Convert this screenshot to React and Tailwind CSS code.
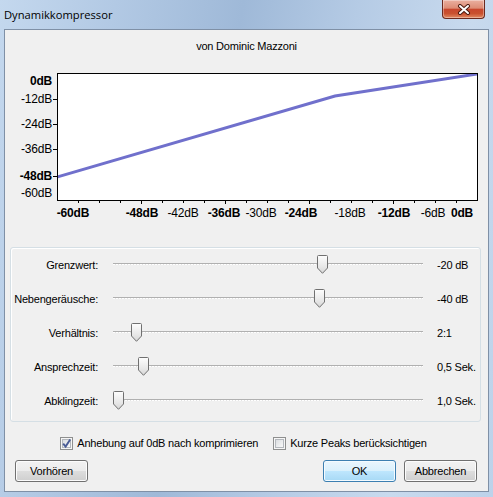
import React from 'react';

const sliders = [
  { label: 'Grenzwert:', value: '-20 dB', left: 204 },
  { label: 'Nebengeräusche:', value: '-40 dB', left: 201 },
  { label: 'Verhältnis:', value: '2:1', left: 18 },
  { label: 'Ansprechzeit:', value: '0,5 Sek.', left: 25 },
  { label: 'Abklingzeit:', value: '1,0 Sek.', left: 0 },
];

const yLabels = [
  { t: '0dB', y: 25, bold: true },
  { t: '-12dB', y: 43 },
  { t: '-24dB', y: 68 },
  { t: '-36dB', y: 93 },
  { t: '-48dB', y: 120, bold: true },
  { t: '-60dB', y: 137 },
];

const xLabels = [
  { t: '-60dB', x: 68, bold: true },
  { t: '-48dB', x: 137, bold: true },
  { t: '-42dB', x: 178 },
  { t: '-36dB', x: 219, bold: true },
  { t: '-30dB', x: 256 },
  { t: '-24dB', x: 296, bold: true },
  { t: '-18dB', x: 345 },
  { t: '-12dB', x: 389, bold: true },
  { t: '-6dB', x: 428 },
  { t: '0dB', x: 457, bold: true },
];

function Chart() {
  const ticks = [];
  for (let k = 1; k < 20; k++) ticks.push(k);
  return (
    <svg width="483" height="165" className="block" style={{ fontFamily: '"Liberation Sans", Arial, sans-serif' }}>
      <defs>
        <clipPath id="plot">
          <rect x="53" y="14" width="419" height="126" />
        </clipPath>
      </defs>
      <rect x="52.5" y="13.5" width="420" height="127" fill="#ffffff" />
      <polyline points="52,117 330,36 472,14" fill="none" stroke="#7070cc" strokeWidth="3" clipPath="url(#plot)" />
      <rect x="52.5" y="13.5" width="420" height="127" fill="none" stroke="#000000" />
      {[39.5, 64.5, 89.5, 116.5].map((y) => (
        <line key={y} x1="48" x2="52" y1={y} y2={y} stroke="#000000" />
      ))}
      {ticks.map((k) => (
        <line key={k} x1={52.5 + 21 * k} x2={52.5 + 21 * k} y1="141" y2={k % 4 === 0 ? 144 : 143} stroke="#000000" />
      ))}
      {yLabels.map((l) => (
        <text key={l.t} x="47" y={l.y} textAnchor="end" fontSize="12" fontWeight={l.bold ? 'bold' : 'normal'} fill="#000">
          {l.t}
        </text>
      ))}
      {xLabels.map((l) => (
        <text key={l.t} x={l.x} y="157" textAnchor="middle" fontSize="12" fontWeight={l.bold ? 'bold' : 'normal'} fill="#000">
          {l.t}
        </text>
      ))}
    </svg>
  );
}

function Thumb({ left }) {
  return (
    <svg width="11" height="19" className="absolute top-0" style={{ left }}>
      <defs>
        <linearGradient id={'tg' + left} x1="0" y1="0" x2="0" y2="1">
          <stop offset="0" stopColor="#fdfdfd" />
          <stop offset="0.6" stopColor="#e8e8e8" />
          <stop offset="1" stopColor="#d6d6d6" />
        </linearGradient>
      </defs>
      <path
        d="M1.5,0.5 H9.5 Q10.5,0.5 10.5,1.5 V13 L5.5,18.3 L0.5,13 V1.5 Q0.5,0.5 1.5,0.5 Z"
        fill={'url(#tg' + left + ')'}
        stroke="#707070"
      />
    </svg>
  );
}

function Checkbox({ checked, id }) {
  return (
    <svg width="13" height="13" className="shrink-0">
      <defs>
        <linearGradient id={id} x1="0" y1="0" x2="1" y2="1">
          <stop offset="0" stopColor="#d9dcdf" />
          <stop offset="1" stopColor="#fbfbfb" />
        </linearGradient>
      </defs>
      <rect x="0.5" y="0.5" width="12" height="12" fill="#f6f6f6" stroke="#8e8f8f" />
      <rect x="2.5" y="2.5" width="8" height="8" fill={'url(#' + id + ')'} stroke="#b4b8bd" />
      {checked && (
        <path d="M3.2,6.6 L5.6,9.6 L10.2,2.4" fill="none" stroke="#4a5c96" strokeWidth="1.9" />
      )}
    </svg>
  );
}

function Button({ children, primary }) {
  if (primary) {
    return (
      <button className="w-[73px] h-[22px] rounded-[3px] border border-[#3c7fb1] bg-[linear-gradient(180deg,#eaf6fd_0%,#d9f0fc_50%,#bee6fd_51%,#a7d9f5_100%)] shadow-[inset_0_0_0_1px_#f4fbff] text-[11px] tracking-[-0.2px] text-black">
        {children}
      </button>
    );
  }
  return (
    <button className="w-[73px] h-[22px] rounded-[3px] border border-[#707070] bg-[linear-gradient(180deg,#f2f2f2_0%,#ebebeb_50%,#dddddd_51%,#cfcfcf_100%)] shadow-[inset_0_0_0_1px_#fcfcfc] text-[11px] tracking-[-0.2px] text-black">
      {children}
    </button>
  );
}

export default function App() {
  return (
    <div className="w-[493px] h-[497px] flex flex-col overflow-hidden bg-[linear-gradient(100deg,#c4d8ee_0%,#b2c9e4_20%,#9fb9d8_42%,#b5cbe5_62%,#c8daee_82%,#bcd2ea_100%)] font-['Liberation_Sans',Arial,sans-serif]">
      <div className="h-[29px] shrink-0 flex items-start">
        <div className="pl-[4px] pt-[7px] leading-[16px] text-[11.2px] text-black font-['Open_Sans','Liberation_Sans',sans-serif]">
          Dynamikkompressor
        </div>
        <div className="ml-auto mr-[8px] w-[43px] h-[19px] rounded-b-[4px] border border-t-0 border-[#6b2a1f] bg-[linear-gradient(180deg,#eab0a0_0%,#dd8c75_45%,#c8472d_52%,#c9512f_75%,#e28a62_100%)] shadow-[inset_0_0_0_1px_rgba(255,255,255,0.35)] flex items-center justify-center">
          <svg width="14" height="11">
            <path d="M3,2 L11,9 M11,2 L3,9" stroke="#4a1a10" strokeWidth="4" strokeLinecap="round" />
            <path d="M3,2 L11,9 M11,2 L3,9" stroke="#ffffff" strokeWidth="2" strokeLinecap="round" />
          </svg>
        </div>
      </div>

      <div className="ml-[4px] mr-[4px] h-[463px] shrink-0 border border-[#7f90a6] bg-[#f0f0f0] flex flex-col text-[11px] tracking-[-0.2px] text-black">
        <div className="mt-[10px] h-[13px] leading-[13px] text-center">von Dominic Mazzoni</div>

        <div className="mt-[7px]">
          <Chart />
        </div>

        <div className="mt-[22px] ml-[5px] mr-[7px] h-[175px] border border-[#d5dfe5] rounded-[3px] shadow-[inset_1px_1px_0_#ffffff] flex flex-col">
          {sliders.map((s) => (
            <div key={s.label} className="h-[34px] flex items-center">
              <div className="w-[87px] shrink-0 text-right whitespace-nowrap">{s.label}</div>
              <div className="ml-[15px] w-[310px] h-[20px] relative shrink-0">
                <div className="mt-[8px] h-[1px] bg-[#b0b0b0]" />
                <div className="h-[1px] bg-[repeating-linear-gradient(90deg,#ffffff_0px,#ffffff_2px,#e4e4e4_2px,#e4e4e4_3px)]" />
                <Thumb left={s.left} />
              </div>
              <div className="ml-[14px] whitespace-nowrap">{s.value}</div>
            </div>
          ))}
        </div>

        <div className="mt-[15px] h-[13px] flex items-center justify-center pr-[6px]">
          <Checkbox checked id="cb1" />
          <span className="ml-[4px] leading-[13px]">Anhebung auf 0dB nach komprimieren</span>
          <span className="ml-[15px]" />
          <Checkbox id="cb2" />
          <span className="ml-[4px] leading-[13px]">Kurze Peaks berücksichtigen</span>
        </div>

        <div className="mt-[10px] flex items-center pl-[10px] pr-[11px]">
          <Button>Vorhören</Button>
          <div className="flex-1" />
          <Button primary>OK</Button>
          <div className="w-[8px]" />
          <Button>Abbrechen</Button>
        </div>
      </div>
    </div>
  );
}
